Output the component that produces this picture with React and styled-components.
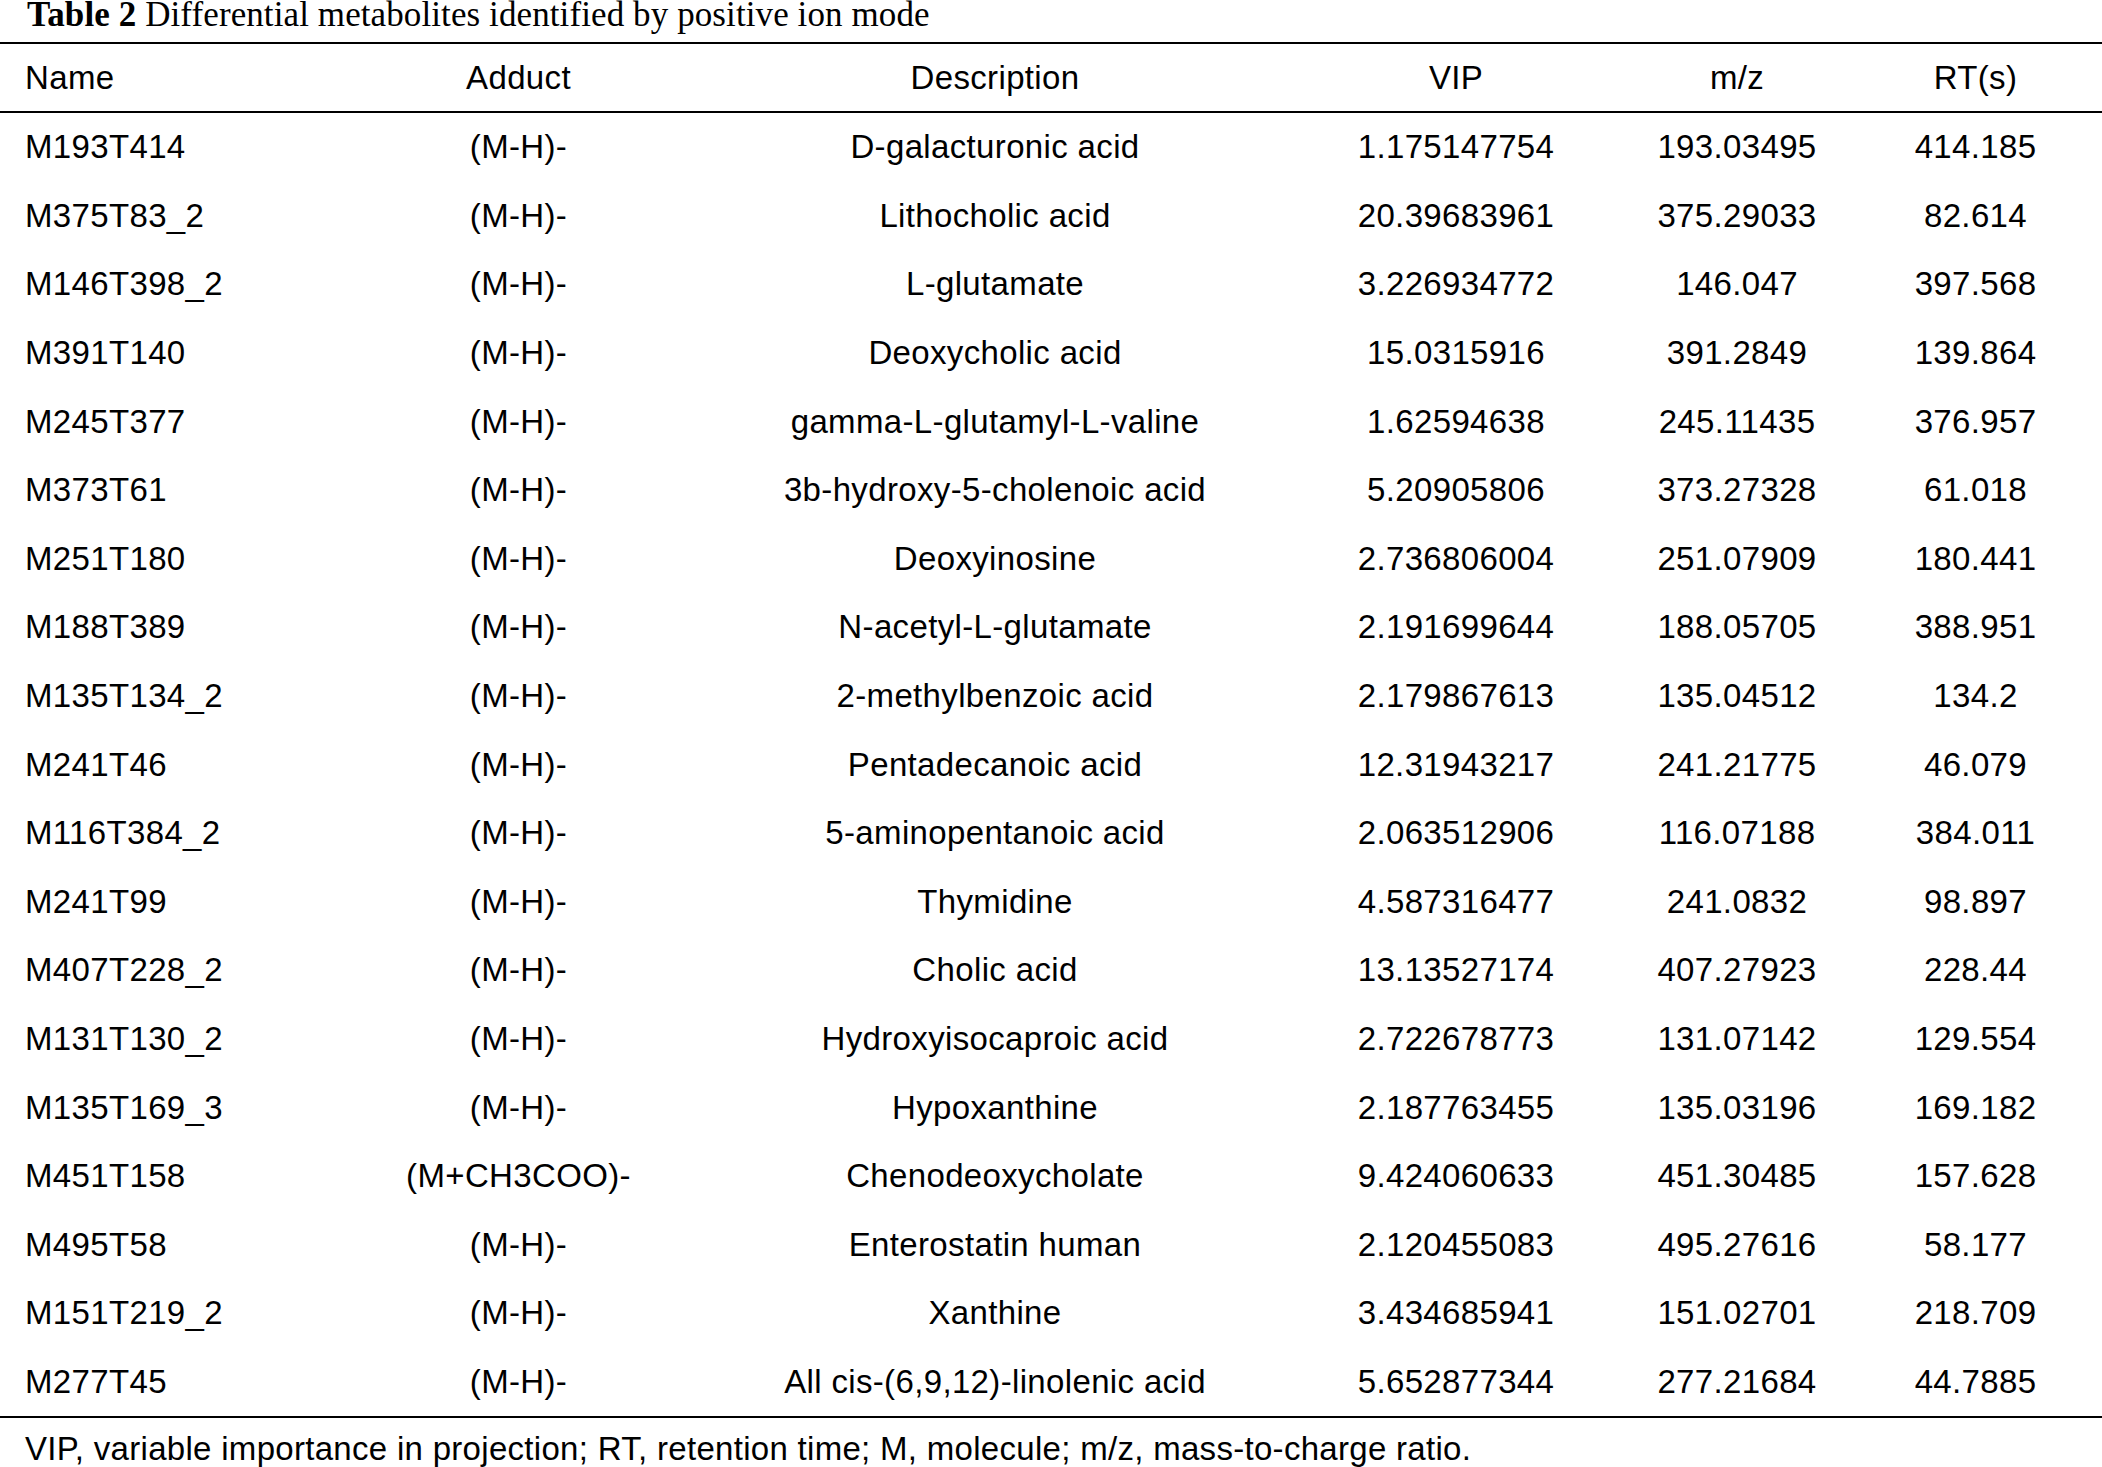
import styled, { createGlobalStyle } from "styled-components";

const GlobalStyle = createGlobalStyle`
  html, body {
    margin: 0;
    padding: 0;
    background: #ffffff;
  }
  body {
    width: 2102px;
    color: #000;
    font-family: "Liberation Sans", Arial, Helvetica, sans-serif;
  }
`;

const columns = "330px 377px 576px 346px 216px 257px";

const Page = styled.div`
  width: 2102px;
  height: 1467px;
  overflow: hidden;
`;

const Caption = styled.div`
  height: 42px;
  padding-left: 27px;
  font-family: "Liberation Serif", "Times New Roman", serif;
  font-size: 35px;
  line-height: 30px;
  letter-spacing: 0.1px;
  color: #000;
  white-space: nowrap;

  b {
    font-weight: 700;
  }
`;

const Table = styled.div`
  border-top: 2px solid #000;
  border-bottom: 2px solid #000;
`;

const HeaderRow = styled.div`
  display: grid;
  grid-template-columns: ${columns};
  height: 67px;
  align-items: center;
  border-bottom: 2px solid #000;
`;

const Row = styled.div`
  display: grid;
  grid-template-columns: ${columns};
  height: 68.6px;
  align-items: center;
`;

const Cell = styled.div`
  font-size: 33px;
  letter-spacing: 0.35px;
  line-height: 40px;
  white-space: nowrap;
  text-align: ${(p) => (p.$left ? "left" : "center")};
  padding-left: ${(p) => (p.$left ? "25px" : p.$last ? "4px" : "0")};
`;

const Note = styled.div`
  padding: 10px 0 0 25px;
  font-size: 33px;
  letter-spacing: 0.3px;
  line-height: 41px;
  white-space: nowrap;
`;

const headers = ["Name", "Adduct", "Description", "VIP", "m/z", "RT(s)"];

const rows = [
  ["M193T414", "(M-H)-", "D-galacturonic acid", "1.175147754", "193.03495", "414.185"],
  ["M375T83_2", "(M-H)-", "Lithocholic acid", "20.39683961", "375.29033", "82.614"],
  ["M146T398_2", "(M-H)-", "L-glutamate", "3.226934772", "146.047", "397.568"],
  ["M391T140", "(M-H)-", "Deoxycholic acid", "15.0315916", "391.2849", "139.864"],
  ["M245T377", "(M-H)-", "gamma-L-glutamyl-L-valine", "1.62594638", "245.11435", "376.957"],
  ["M373T61", "(M-H)-", "3b-hydroxy-5-cholenoic acid", "5.20905806", "373.27328", "61.018"],
  ["M251T180", "(M-H)-", "Deoxyinosine", "2.736806004", "251.07909", "180.441"],
  ["M188T389", "(M-H)-", "N-acetyl-L-glutamate", "2.191699644", "188.05705", "388.951"],
  ["M135T134_2", "(M-H)-", "2-methylbenzoic acid", "2.179867613", "135.04512", "134.2"],
  ["M241T46", "(M-H)-", "Pentadecanoic acid", "12.31943217", "241.21775", "46.079"],
  ["M116T384_2", "(M-H)-", "5-aminopentanoic acid", "2.063512906", "116.07188", "384.011"],
  ["M241T99", "(M-H)-", "Thymidine", "4.587316477", "241.0832", "98.897"],
  ["M407T228_2", "(M-H)-", "Cholic acid", "13.13527174", "407.27923", "228.44"],
  ["M131T130_2", "(M-H)-", "Hydroxyisocaproic acid", "2.722678773", "131.07142", "129.554"],
  ["M135T169_3", "(M-H)-", "Hypoxanthine", "2.187763455", "135.03196", "169.182"],
  ["M451T158", "(M+CH3COO)-", "Chenodeoxycholate", "9.424060633", "451.30485", "157.628"],
  ["M495T58", "(M-H)-", "Enterostatin human", "2.120455083", "495.27616", "58.177"],
  ["M151T219_2", "(M-H)-", "Xanthine", "3.434685941", "151.02701", "218.709"],
  ["M277T45", "(M-H)-", "All cis-(6,9,12)-linolenic acid", "5.652877344", "277.21684", "44.7885"],
];

export default function App() {
  return (
    <Page>
      <GlobalStyle />
      <Caption>
        <b>Table 2</b> Differential metabolites identified by positive ion mode
      </Caption>
      <Table>
        <HeaderRow>
          {headers.map((h, i) => (
            <Cell key={h} $left={i === 0} $last={i === 5}>
              {h}
            </Cell>
          ))}
        </HeaderRow>
        {rows.map((row) => (
          <Row key={row[0]}>
            {row.map((val, i) => (
              <Cell key={i} $left={i === 0} $last={i === 5}>
                {val}
              </Cell>
            ))}
          </Row>
        ))}
      </Table>
      <Note>
        VIP, variable importance in projection; RT, retention time; M, molecule; m/z, mass-to-charge ratio.
      </Note>
    </Page>
  );
}
